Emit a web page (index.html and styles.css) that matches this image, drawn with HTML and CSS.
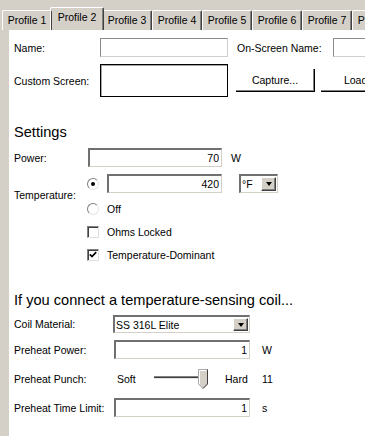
FILE: index.html
```html
<!DOCTYPE html>
<html lang="en">
<head>
    <meta charset="UTF-8">
    <meta name="viewport" content="width=device-width, initial-scale=1.0">
    <title>Profiles</title>
    <link rel="stylesheet" href="styles.css">
</head>
<body>
    <div class="tabs">
        <div class="tab">Profile 1</div>
        <div class="tab active">Profile 2</div>
        <div class="tab">Profile 3</div>
        <div class="tab">Profile 4</div>
        <div class="tab">Profile 5</div>
        <div class="tab">Profile 6</div>
        <div class="tab">Profile 7</div>
        <div class="tab">Profile 8</div>
    </div>

    <div class="panel">
        <div class="row">
            <span class="label lbl-top">Name:</span>
            <input class="field thin w-name" type="text">
            <span class="label lbl-osn">On-Screen Name:</span>
            <input class="field thin w-name" type="text">
        </div>

        <div class="row row-screen">
            <span class="label lbl-top">Custom Screen:</span>
            <div class="screen-box"></div>
            <div class="btn">Capture...</div>
            <div class="btn btn-load">Load...</div>
        </div>

        <h3 class="heading heading-settings">Settings</h3>

        <div class="row row-gap7">
            <span class="label lbl-set">Power:</span>
            <input class="field w-power" type="text" value="70">
            <span class="unit unit-near">W</span>
        </div>

        <div class="temp">
            <span class="label temp-label">Temperature:</span>
            <div class="opt">
                <span class="radio on"></span>
                <input class="field w-temp" type="text" value="420">
                <div class="combo w-unit">
                    <span class="combo-text">°F</span>
                    <span class="combo-btn"><span class="arrow"></span></span>
                </div>
            </div>
            <div class="opt">
                <span class="radio"></span>
                <span>Off</span>
            </div>
            <div class="opt">
                <span class="check"></span>
                <span>Ohms Locked</span>
            </div>
            <div class="opt">
                <span class="check">
                    <svg width="8" height="8" viewBox="0 0 8 8"><path d="M0.8 3.4 L3 5.6 L7.2 1.2" fill="none" stroke="#000" stroke-width="1.7"/></svg>
                </span>
                <span>Temperature-Dominant</span>
            </div>
        </div>

        <h3 class="heading heading-coil">If you connect a temperature-sensing coil...</h3>

        <div class="row row-coil">
            <span class="label lbl-coil">Coil Material:</span>
            <div class="combo w-coil">
                <span class="combo-text">SS 316L Elite</span>
                <span class="combo-btn"><span class="arrow"></span></span>
            </div>
        </div>

        <div class="row row-gap7">
            <span class="label lbl-coil">Preheat Power:</span>
            <input class="field w-pre" type="text" value="1">
            <span class="unit unit-far">W</span>
        </div>

        <div class="row row-punch">
            <span class="label lbl-coil">Preheat Punch:</span>
            <span class="soft">Soft</span>
            <svg class="slider" width="54" height="21" viewBox="0 0 54 21">
                <rect x="0" y="7" width="45" height="1" fill="#808080"/>
                <rect x="0" y="8" width="45" height="1" fill="#404040"/>
                <rect x="0" y="9" width="45" height="1" fill="#e4e4e4"/>
                <polygon points="44.5,0.5 53.5,0.5 53.5,15 49,19.5 44.5,15" fill="#d4d0c8" stroke="#a8a8a8"/>
                <polyline points="53.5,0.5 53.5,15 49,19.5" fill="none" stroke="#404040"/>
                <polyline points="45.5,15 45.5,1.5 52.5,1.5" fill="none" stroke="#fff"/>
            </svg>
            <span class="hard">Hard</span>
            <span>11</span>
        </div>

        <div class="row row-time">
            <span class="label lbl-coil">Preheat Time Limit:</span>
            <input class="field w-pre" type="text" value="1">
            <span class="unit unit-far">s</span>
        </div>
    </div>
</body>
</html>
```

FILE: styles.css
```css
/* General */
body {
    margin: 0;
    background-color: #d4d0c8;
    color: #000;
    font-family: "Liberation Sans", Arial, sans-serif;
    font-size: 10.5px;
    height: 436px;
    overflow: hidden;
}

/* Tabs */
.tabs {
    display: flex;
    align-items: flex-end;
    height: 30px;
    padding-left: 2px;
    white-space: nowrap;
    overflow: hidden;
}

.tab {
    flex-shrink: 0;
    width: 50px;
    height: 20px;
    box-sizing: border-box;
    border-top: 1px solid #fff;
    border-left: 1px solid #fff;
    border-right: 1px solid #404040;
    box-shadow: inset -1px 0 #808080;
    border-radius: 2px 2px 0 0;
    text-align: center;
    line-height: 19px;
}

.tab.active {
    position: relative;
    z-index: 1;
    width: 54px;
    height: 23px;
    margin: 0 -2px;
    line-height: 18px;
}

/* Panel */
.panel {
    margin-left: 9px;
    width: 420px;
    height: 406px;
    box-sizing: border-box;
    padding: 8px 0 0 5px;
    background-color: #fff;
}

.row {
    display: flex;
    align-items: center;
    height: 19px;
}

.label {
    flex-shrink: 0;
}

.lbl-top { width: 86px; }
.lbl-osn { width: 96px; margin-left: 9px; }
.lbl-set { width: 74px; }
.lbl-coil { width: 100px; }

.row-gap7 { margin-top: 7px; }

.row-screen {
    height: 33px;
    margin-top: 7px;
}

.screen-box {
    flex-shrink: 0;
    width: 128px;
    height: 33px;
    box-sizing: border-box;
    border: 1px solid #000;
    box-shadow: inset 1px 1px rgba(0, 0, 0, 0.35);
}

.btn {
    flex-shrink: 0;
    width: 79px;
    height: 23px;
    box-sizing: border-box;
    margin-left: 8px;
    border-right: 1px solid #000;
    border-bottom: 1px solid #000;
    box-shadow: inset -1px -1px #808080;
    text-align: center;
    line-height: 22px;
}

.btn-load {
    margin-left: 6px;
}

/* Headings */
.heading {
    margin: 0;
    font-size: 14.6px;
    font-weight: normal;
    line-height: 17px;
}

.heading-settings { margin-top: 27px; }
.heading-coil { margin-top: 30px; }

/* Fields */
.field {
    flex-shrink: 0;
    height: 19px;
    box-sizing: border-box;
    margin: 0;
    padding: 0 2px;
    border-style: solid;
    border-width: 2px 1px 1px 2px;
    border-color: #707070 #d4d0c8 #d4d0c8 #707070;
    background-color: #fff;
    font: inherit;
    color: #000;
    text-align: right;
    outline: none;
}

.field.thin {
    border-width: 1px;
    border-color: #8a8a8a #cfcfcf #cfcfcf #8a8a8a;
}

.w-name { width: 128px; }
.w-power { width: 134px; }
.w-temp { width: 115px; }
.w-pre { width: 136px; }

.unit-near { margin-left: 9px; }
.unit-far { margin-left: 12px; }

/* Combo boxes */
.combo {
    flex-shrink: 0;
    display: flex;
    height: 19px;
    box-sizing: border-box;
    padding: 1px 1px 1px 0;
    border-style: solid;
    border-width: 2px 1px 1px 2px;
    border-color: #707070 #d4d0c8 #d4d0c8 #707070;
    background-color: #fff;
}

.combo-text {
    flex: 1;
    padding-left: 1px;
    line-height: 14px;
    white-space: nowrap;
}

.combo-btn {
    width: 15px;
    box-sizing: border-box;
    border-style: solid;
    border-width: 1px;
    border-color: #fff #404040 #404040 #fff;
    box-shadow: inset -1px -1px #808080;
    background-color: #d4d0c8;
    display: flex;
    align-items: center;
    justify-content: center;
}

.arrow {
    width: 0;
    height: 0;
    border-left: 3.5px solid transparent;
    border-right: 3.5px solid transparent;
    border-top: 4px solid #000;
}

.w-unit {
    width: 39px;
    margin-left: 9px;
}

.w-coil {
    width: 137px;
    height: 18px;
    margin-left: -1px;
}

/* Temperature group */
.temp {
    display: grid;
    grid-template-columns: 73px auto;
    grid-template-rows: 19px 14px 14px 14px;
    row-gap: 9px;
    margin-top: 7px;
}

.temp-label {
    grid-row: 1 / 3;
    align-self: center;
}

.temp .opt {
    grid-column: 2;
    display: flex;
    align-items: center;
    gap: 8px;
}

.radio {
    flex-shrink: 0;
    width: 12px;
    height: 12px;
    box-sizing: border-box;
    border-radius: 50%;
    border: 1px solid;
    border-color: #808080 #e6e6e6 #e6e6e6 #808080;
    background-color: #fff;
    display: flex;
    align-items: center;
    justify-content: center;
}

.radio.on::after {
    content: "";
    width: 4px;
    height: 4px;
    border-radius: 50%;
    background-color: #000;
}

.check {
    flex-shrink: 0;
    width: 12px;
    height: 12px;
    box-sizing: border-box;
    border: 1px solid;
    border-color: #808080 #e0e0e0 #e0e0e0 #808080;
    box-shadow: inset 1px 1px #404040;
    background-color: #fff;
    display: flex;
    align-items: center;
    justify-content: center;
}

/* Coil section */
.row-coil {
    height: 18px;
    margin-top: 6px;
}

.row-punch {
    height: 20px;
    margin-top: 10px;
}

.row-time {
    margin-top: 9px;
}

.soft {
    width: 37px;
    margin-left: 3px;
}

.slider {
    flex-shrink: 0;
}

.hard {
    width: 37px;
    margin-left: 17px;
}
```
